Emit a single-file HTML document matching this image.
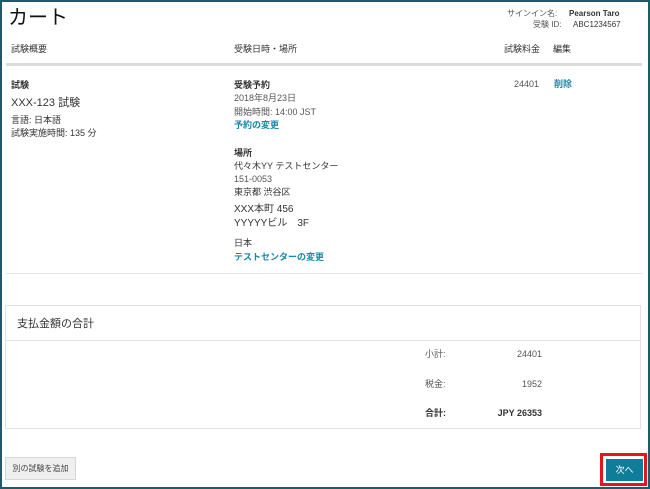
<!DOCTYPE html>
<html><head><meta charset="utf-8"><style>
*{margin:0;padding:0;box-sizing:border-box}
body{width:650px;height:489px;overflow:hidden;background:#fff;font-family:"Liberation Sans","Noto Sans CJK JP",sans-serif;color:#333;position:relative}
.frame{position:absolute;left:0;top:0;width:650px;height:489px;border:2px solid #1d5b6b;border-right-width:2px}
.t{position:absolute;white-space:nowrap;font-size:9px;line-height:11px}
.b{font-weight:bold}
.a{color:#1a88a8;font-weight:bold}
.g{color:#555}
</style></head><body>
<div class="frame"></div>
<div class="t" style="left:8px;top:6px;font-size:20px;line-height:24px;color:#111">カート</div>
<div class="t g" style="left:507px;top:8px;font-size:8px">サインイン名:</div>
<div class="t b" style="left:569px;top:8px;font-size:8px">Pearson Taro</div>
<div class="t g" style="left:533px;top:19px;font-size:8px">受験 ID:</div>
<div class="t" style="left:573px;top:19px;font-size:8px">ABC1234567</div>
<div class="t" style="left:11px;top:44px">試験概要</div>
<div class="t" style="left:234px;top:44px">受験日時・場所</div>
<div class="t" style="left:504px;top:44px">試験料金</div>
<div class="t" style="left:553px;top:44px">編集</div>
<div style="position:absolute;left:6px;top:63px;width:636px;height:3px;background:#dcdcdc"></div>
<div class="t b" style="left:11px;top:80px">試験</div>
<div class="t" style="left:11px;top:97px;font-size:11px;line-height:13px">XXX-123 試験</div>
<div class="t" style="left:11px;top:115px">言語: 日本語</div>
<div class="t" style="left:11px;top:128px">試験実施時間: 135 分</div>
<div class="t b" style="left:234px;top:80px">受験予約</div>
<div class="t g" style="left:234px;top:93px">2018年8月23日</div>
<div class="t g" style="left:234px;top:107px">開始時間: 14:00 JST</div>
<div class="t a" style="left:234px;top:120px">予約の変更</div>
<div class="t b" style="left:234px;top:148px">場所</div>
<div class="t" style="left:234px;top:161px">代々木YY テストセンター</div>
<div class="t g" style="left:234px;top:174px">151-0053</div>
<div class="t" style="left:234px;top:187px">東京都 渋谷区</div>
<div class="t" style="left:234px;top:204px;font-size:10px">XXX本町 456</div>
<div class="t" style="left:234px;top:218px;font-size:10px">YYYYYビル　3F</div>
<div class="t" style="left:234px;top:238px">日本</div>
<div class="t a" style="left:234px;top:252px">テストセンターの変更</div>
<div class="t g" style="left:514px;top:79px">24401</div>
<div class="t a" style="left:554px;top:79px">削除</div>
<div style="position:absolute;left:6px;top:273px;width:636px;height:1px;background:#e6e6e6"></div>
<div style="position:absolute;left:5px;top:305px;width:636px;height:124px;border:1px solid #e2e2e2"></div>
<div style="position:absolute;left:5px;top:340px;width:636px;height:1px;background:#e2e2e2"></div>
<div class="t" style="left:17px;top:317px;font-size:11px;line-height:14px">支払金額の合計</div>
<div class="t g" style="left:425px;top:349px">小計:</div>
<div class="t g" style="left:500px;top:349px;width:42px;text-align:right">24401</div>
<div class="t g" style="left:425px;top:379px">税金:</div>
<div class="t g" style="left:500px;top:379px;width:42px;text-align:right">1952</div>
<div class="t b" style="left:425px;top:408px">合計:</div>
<div class="t b" style="left:480px;top:408px;width:62px;text-align:right">JPY 26353</div>
<div style="position:absolute;left:5px;top:457px;width:71px;height:23px;background:#efefef;border:1px solid #d6d6d6;font-size:8px;line-height:21px;text-align:center;color:#444">別の試験を追加</div>
<div style="position:absolute;left:600px;top:453px;width:47px;height:33px;border:3px solid #e8141b"></div>
<div style="position:absolute;left:606px;top:459px;width:37px;height:22px;background:#0f7d99;color:#fff;font-size:9px;line-height:22px;text-align:center">次へ</div>
</body></html>
